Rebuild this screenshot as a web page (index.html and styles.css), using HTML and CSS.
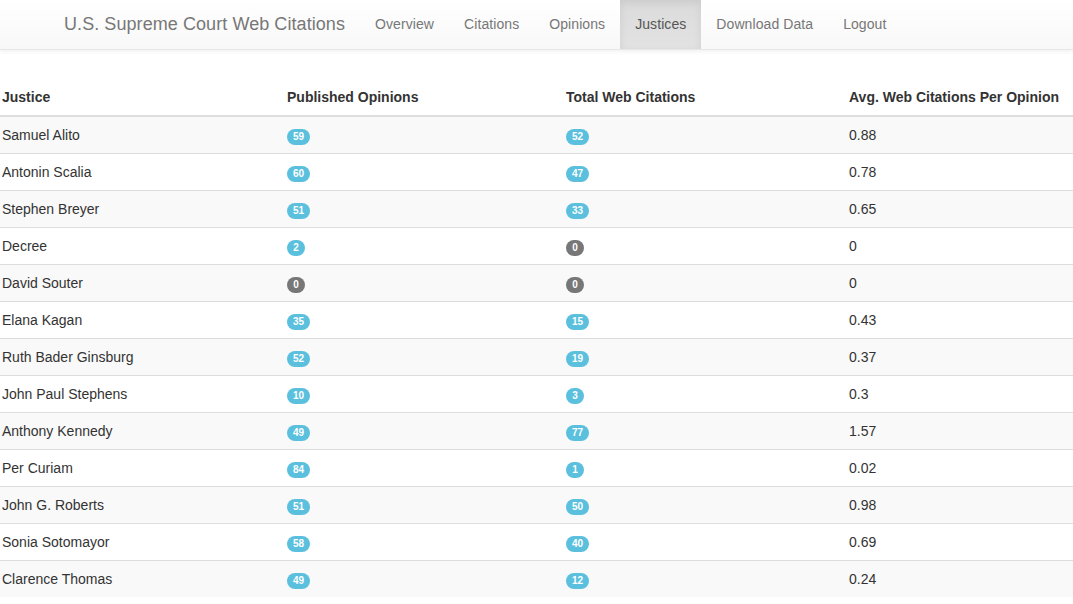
FILE: index.html
```html
<!DOCTYPE html>
<html>
<head>
<meta charset="utf-8">
<link rel="stylesheet" href="styles.css">
</head>
<body>
<nav class="navbar">
  <a class="brand" href="#">U.S. Supreme Court Web Citations</a>
  <ul class="nav">
    <li><a href="#">Overview</a></li>
    <li><a href="#">Citations</a></li>
    <li><a href="#">Opinions</a></li>
    <li class="active"><a href="#">Justices</a></li>
    <li><a href="#">Download Data</a></li>
    <li><a href="#">Logout</a></li>
  </ul>
</nav>
<main class="content">
<table class="table">
  <colgroup>
    <col class="c1"><col class="c2"><col class="c3"><col class="c4">
  </colgroup>
  <thead>
    <tr><th>Justice</th><th>Published Opinions</th><th>Total Web Citations</th><th>Avg. Web Citations Per Opinion</th></tr>
  </thead>
  <tbody>
    <tr><td>Samuel Alito</td><td><span class="badge">59</span></td><td><span class="badge">52</span></td><td>0.88</td></tr>
    <tr><td>Antonin Scalia</td><td><span class="badge">60</span></td><td><span class="badge">47</span></td><td>0.78</td></tr>
    <tr><td>Stephen Breyer</td><td><span class="badge">51</span></td><td><span class="badge">33</span></td><td>0.65</td></tr>
    <tr><td>Decree</td><td><span class="badge">2</span></td><td><span class="badge zero">0</span></td><td>0</td></tr>
    <tr><td>David Souter</td><td><span class="badge zero">0</span></td><td><span class="badge zero">0</span></td><td>0</td></tr>
    <tr><td>Elana Kagan</td><td><span class="badge">35</span></td><td><span class="badge">15</span></td><td>0.43</td></tr>
    <tr><td>Ruth Bader Ginsburg</td><td><span class="badge">52</span></td><td><span class="badge">19</span></td><td>0.37</td></tr>
    <tr><td>John Paul Stephens</td><td><span class="badge">10</span></td><td><span class="badge">3</span></td><td>0.3</td></tr>
    <tr><td>Anthony Kennedy</td><td><span class="badge">49</span></td><td><span class="badge">77</span></td><td>1.57</td></tr>
    <tr><td>Per Curiam</td><td><span class="badge">84</span></td><td><span class="badge">1</span></td><td>0.02</td></tr>
    <tr><td>John G. Roberts</td><td><span class="badge">51</span></td><td><span class="badge">50</span></td><td>0.98</td></tr>
    <tr><td>Sonia Sotomayor</td><td><span class="badge">58</span></td><td><span class="badge">40</span></td><td>0.69</td></tr>
    <tr><td>Clarence Thomas</td><td><span class="badge">49</span></td><td><span class="badge">12</span></td><td>0.24</td></tr>
  </tbody>
</table>
</main>
</body>
</html>
```
FILE: styles.css
```css
* { box-sizing: border-box; }
html, body { margin: 0; padding: 0; }
body {
  font-family: "Liberation Sans", Arial, sans-serif;
  font-size: 14px;
  line-height: 20px;
  color: #333;
  background: #fff;
}
a { text-decoration: none; }

.navbar {
  display: flex;
  align-items: stretch;
  height: 50px;
  padding-left: 49px;
  background: linear-gradient(to bottom, #fff 0, #f8f8f8 100%);
  border-bottom: 1px solid #e7e7e7;
  box-shadow: inset 0 1px 0 rgba(255,255,255,.15), 0 1px 5px rgba(0,0,0,.075);
}
.brand {
  display: block;
  padding: 14px 15px 15px;
  font-size: 18px;
  line-height: 20px;
  letter-spacing: 0.07px;
  color: #777;
}
.nav {
  display: flex;
  list-style: none;
  margin: 0;
  padding: 0;
}
.nav li a {
  display: block;
  padding: 14px 15px 15px;
  color: #777;
  line-height: 20px;
  letter-spacing: 0.08px;
  height: 49px;
}
.nav li.active a {
  color: #555;
  background: linear-gradient(to bottom, #dbdbdb 0, #e2e2e2 100%);
  box-shadow: inset 0 3px 9px rgba(0,0,0,.075);
}

.content { padding-top: 29px; }

.table {
  width: 100%;
  table-layout: fixed;
  border-collapse: collapse;
  border-spacing: 0;
}
.c1 { width: 285px; }
.c2 { width: 279px; }
.c3 { width: 283px; }
.table th, .table td {
  text-align: left;
  padding: 8px 2px;
  line-height: 20px;
  vertical-align: top;
  white-space: nowrap;
}
.table th {
  font-weight: bold;
  border-bottom: 2px solid #ddd;
}
.table td { border-top: 1px solid #ddd; }
.table tbody tr:first-child td { border-top: 0; }
.table tbody tr:nth-child(odd) { background: #f9f9f9; }

.badge {
  display: inline-block;
  min-width: 18px;
  padding: 3px 6px;
  font-size: 10px;
  font-weight: bold;
  line-height: 10px;
  color: #fff;
  text-align: center;
  white-space: nowrap;
  vertical-align: middle;
  background-color: #5bc0de;
  border-radius: 10px;
  position: relative;
  top: 1px;
}
.badge.zero { background-color: #777; }
```
